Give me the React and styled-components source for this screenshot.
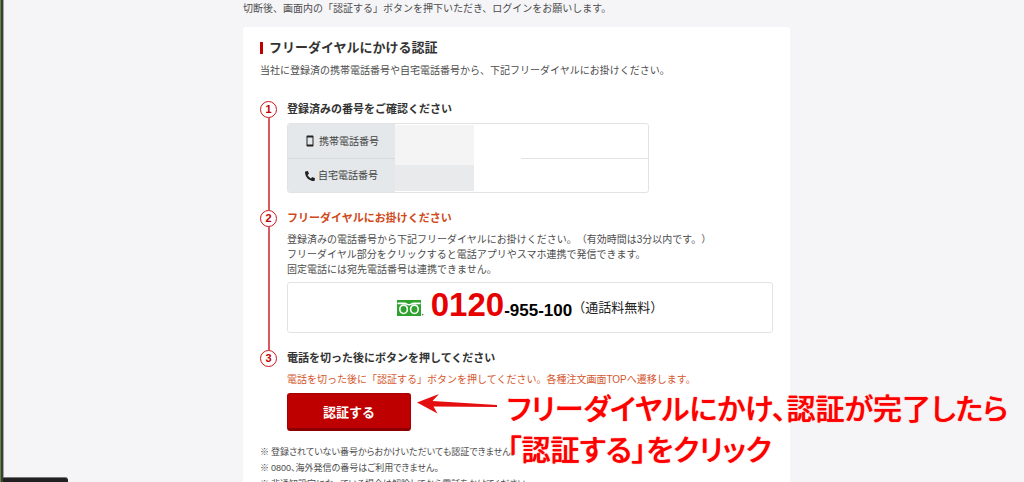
import React from 'react'
import styled, { createGlobalStyle } from 'styled-components'
import { MdSmartphone } from 'react-icons/md'
import { FaPhoneAlt } from 'react-icons/fa'

const GlobalStyle = createGlobalStyle`
* {
    box-sizing:border-box;
}
body {
    margin:0;
    overflow:hidden;
    background:#f5f5f8;
    color:#4d4d4d;
    font-family:"Liberation Sans", "Noto Sans CJK JP", sans-serif;
    font-size:10px;
    line-height:15px;
    text-spacing-trim:space-all;
}
h2, h3, p, ol, ul {
    margin:0;
    padding:0;
}
`;

const Page = styled.div`
position:relative;
height:100vh;
overflow:hidden;
display:flex;
`;

const WindowEdge = styled.div`
flex:none;
width:4px;
background:#3c3c40;
border-left:1px solid #5f8a35;
border-right:1px solid #a4a4a8;
`;

const StatusBar = styled.div`
position:absolute;
left:3px;
bottom:0;
width:65px;
height:5px;
background:#221f20;
border-top:1px solid #77777a;
border-radius:0 3px 0 0;
`;

const Main = styled.main`
flex:1;
padding-left:5px;
`;

const Column = styled.div`
max-width:547px;
margin:0 auto;
`;

const Intro = styled.p`
padding:1px 0 11px;
`;

const Card = styled.section`
padding:11px 17px 24px;
background:#fff;
border-radius:3px;
`;

const Heading = styled.h2`
display:flex;
align-items:center;
gap:6px;
color:#333;
font-size:13px;
line-height:20px;
&::before {
    content:"";
    width:3px;
    height:12px;
    background:#bf0000;
}
`;

const Lead = styled.p`
margin-top:5px;
`;

const Steps = styled.ol`
margin-top:23px;
list-style:none;
`;

const Step = styled.li`
display:flex;
gap:10px;
`;

const Rail = styled.div`
display:flex;
flex-direction:column;
align-items:center;
width:17px;
&::after {
    content:"";
    flex:1;
    width:2px;
    background:${props => props.$last ? 'transparent' : '#d85a5e'};
}
`;

const Marker = styled.span`
width:17px;
height:17px;
border:1px solid #c9151b;
border-radius:50%;
color:#bf0000;
font-size:11px;
font-weight:bold;
text-align:center;
`;

const StepBody = styled.div`
flex:1;
padding-bottom:${props => props.$last ? '13px' : '17px'};
`;

const StepTitle = styled.h3`
margin-bottom:5px;
color:${props => props.$active ? '#cf4a1a' : '#333'};
font-size:11px;
line-height:17px;
`;

const TableWrap = styled.div`
position:relative;
max-width:362px;
`;

const NumberTable = styled.table`
width:100%;
border:1px solid #e3e3e5;
border-radius:3px;
border-spacing:0;
overflow:hidden;
`;

const RowLabel = styled.th`
width:107px;
height:34px;
padding:0;
background:#e5e8eb;
font-weight:normal;
tr + tr > & {
    border-top:1px solid #d9dadc;
}
`;

const RowValue = styled.td`
tr + tr > & {
    border-top:1px solid #e3e3e5;
}
`;

const LabelInner = styled.span`
display:flex;
align-items:center;
justify-content:center;
gap:3px;
color:#444;
& > svg {
    color:#222;
}
`;

// covers the registered numbers
const Mask = styled.div`
position:absolute;
top:2px;
bottom:2px;
left:108px;
width:126px;
background:#fff;
&::before {
    content:"";
    display:block;
    width:79px;
    height:100%;
    background:linear-gradient(#f4f4f4 60%, #e9eaec 60%);
}
`;

const DialBox = styled.div`
display:flex;
align-items:center;
justify-content:center;
height:51px;
margin-top:5px;
border:1px solid #e3e3e5;
border-radius:3px;
`;

const DialNumber = styled.a`
display:flex;
align-items:center;
gap:7px;
color:#000;
font-size:17px;
font-weight:bold;
line-height:34px;
text-decoration:none;
& b {
    color:#e60000;
    font-size:33px;
}
`;

const DialNote = styled.span`
color:#222;
font-size:13px;
`;

const Notice = styled.p`
color:#d4572e;
`;

const Action = styled.div`
position:relative;
display:flex;
margin-top:6px;
`;

const AuthButton = styled.button`
width:124px;
height:38px;
padding:0;
border:1px solid #a80000;
border-bottom:3px solid #8c0000;
border-radius:3px;
background:#bf0000;
color:#fff;
font-family:inherit;
font-size:13px;
font-weight:bold;
cursor:pointer;
`;

const Callout = styled.div`
position:absolute;
top:-6px;
left:130px;
display:flex;
align-items:flex-start;
gap:9px;
color:#f00;
font-family:"Noto Sans CJK JP", sans-serif;
font-size:29px;
font-weight:500;
font-feature-settings:"palt";
line-height:41px;
white-space:nowrap;
text-shadow:0 0 1px #f00, 0 0 2px #fff, 0 0 2px #fff;
& > svg {
    margin-top:6px;
}
`;

const Notes = styled.ul`
list-style:none;
font-size:9px;
line-height:16px;
font-feature-settings:"palt";
`;

const Note = styled.li`
display:flex;
gap:2px;
&::before {
    content:"※";
}
`;

const FreeDialLogo = () => (
    <svg width="27" height="16" viewBox="0 0 27 16" aria-hidden="true">
        <rect width="24" height="16" fill="#2fa12f" />
        <g fill="none" stroke="#fff" strokeWidth="1.6">
            <path d="M0.5 3.4H7.5C9.5 3.4 10.2 4.8 12 4.8C13.8 4.8 14.5 3.4 16.5 3.4H23.5" />
            <ellipse cx="6.6" cy="9.3" rx="3.8" ry="4.2" />
            <ellipse cx="17.4" cy="9.3" rx="3.8" ry="4.2" />
        </g>
        <circle cx="25.6" cy="14.6" r="0.9" fill="#777" />
    </svg>
)

const Arrow = () => (
    <svg width="81" height="22" viewBox="0 0 81 22" aria-hidden="true">
        <path d="M0 9.5L22 1L15.5 8L80 12V14L16.5 13.4L20.5 20.5Z" fill="#e60f0f" />
    </svg>
)

const App = () => {

return <Page>
    <GlobalStyle />
    <WindowEdge />
    <Main>
        <Column>
            <Intro>切断後、画面内の「認証する」ボタンを押下いただき、ログインをお願いします。</Intro>
            <Card>
                <Heading>フリーダイヤルにかける認証</Heading>
                <Lead>当社に登録済の携帯電話番号や自宅電話番号から、下記フリーダイヤルにお掛けください。</Lead>
                <Steps>
                    <Step>
                        <Rail><Marker>1</Marker></Rail>
                        <StepBody>
                            <StepTitle>登録済みの番号をご確認ください</StepTitle>
                            <TableWrap>
                                <NumberTable>
                                    <tbody>
                                        <tr>
                                            <RowLabel scope="row">
                                                <LabelInner><MdSmartphone size={12} />携帯電話番号</LabelInner>
                                            </RowLabel>
                                            <RowValue />
                                        </tr>
                                        <tr>
                                            <RowLabel scope="row">
                                                <LabelInner><FaPhoneAlt size={10} />自宅電話番号</LabelInner>
                                            </RowLabel>
                                            <RowValue />
                                        </tr>
                                    </tbody>
                                </NumberTable>
                                <Mask />
                            </TableWrap>
                        </StepBody>
                    </Step>
                    <Step>
                        <Rail><Marker>2</Marker></Rail>
                        <StepBody>
                            <StepTitle $active>フリーダイヤルにお掛けください</StepTitle>
                            <p>登録済みの電話番号から下記フリーダイヤルにお掛けください。（有効時間は3分以内です。）</p>
                            <p>フリーダイヤル部分をクリックすると電話アプリやスマホ連携で発信できます。</p>
                            <p>固定電話には宛先電話番号は連携できません。</p>
                            <DialBox>
                                <DialNumber href="tel:0120955100">
                                    <FreeDialLogo />
                                    <span><b>0120</b>-955-100</span>
                                </DialNumber>
                                <DialNote>（通話料無料）</DialNote>
                            </DialBox>
                        </StepBody>
                    </Step>
                    <Step>
                        <Rail $last><Marker>3</Marker></Rail>
                        <StepBody $last>
                            <StepTitle>電話を切った後にボタンを押してください</StepTitle>
                            <Notice>電話を切った後に「認証する」ボタンを押してください。各種注文画面TOPへ遷移します。</Notice>
                            <Action>
                                <AuthButton type="button">認証する</AuthButton>
                                <Callout>
                                    <Arrow />
                                    <div>フリーダイヤルにかけ、認証が完了したら<br />「認証する」をクリック</div>
                                </Callout>
                            </Action>
                        </StepBody>
                    </Step>
                </Steps>
                <Notes>
                    <Note>登録されていない番号からおかけいただいても認証できません。</Note>
                    <Note>0800、海外発信の番号はご利用できません。</Note>
                    <Note>非通知設定になっている場合は解除してから電話をかけてください。</Note>
                </Notes>
            </Card>
        </Column>
    </Main>
    <StatusBar />
</Page>
}

export default App;
